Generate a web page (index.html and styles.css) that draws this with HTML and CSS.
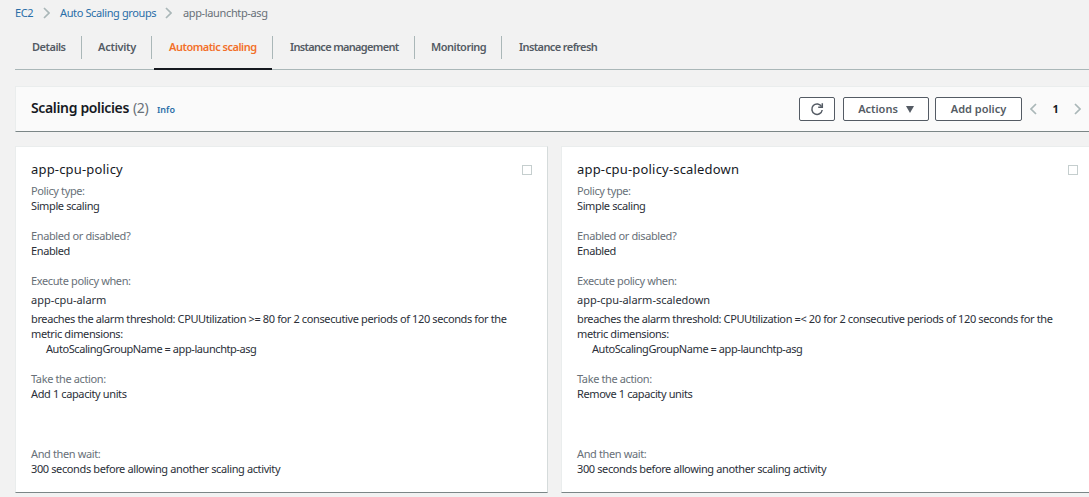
FILE: index.html
```html
<!DOCTYPE html>
<html lang="en">
<head>
<meta charset="utf-8">
<title>Auto Scaling groups</title>
<link rel="stylesheet" href="styles.css">
</head>
<body>
<nav class="breadcrumbs">
  <a class="crumb crumb-ec2">EC2</a>
  <svg class="chevron" viewBox="0 0 7 12"><path d="M1 1l5 5-5 5"/></svg>
  <a class="crumb crumb-groups">Auto Scaling groups</a>
  <svg class="chevron" viewBox="0 0 7 12"><path d="M1 1l5 5-5 5"/></svg>
  <span class="crumb crumb-current">app-launchtp-asg</span>
</nav>
<div class="tabs">
  <a class="tab tab-details"><span>Details</span></a>
  <a class="tab tab-activity"><span>Activity</span></a>
  <a class="tab tab-scaling active"><span>Automatic scaling</span></a>
  <a class="tab tab-management"><span>Instance management</span></a>
  <a class="tab tab-monitoring"><span>Monitoring</span></a>
  <a class="tab tab-refresh"><span>Instance refresh</span></a>
</div>
<header class="panel-header">
  <h2 class="title">Scaling policies</h2><span class="count">(2)</span><a class="info">Info</a>
  <div class="controls">
    <button class="btn btn-refresh"><svg class="refresh" viewBox="0 0 14 14"><path d="M11.6 4.6A5.2 5.2 0 1 0 12.2 8"/><path d="M12.3 1.2v4.1H8.2"/></svg></button>
    <button class="btn btn-actions"><span>Actions</span><svg class="caret" viewBox="0 0 8 7"><path d="M0 0h8L4 7z"/></svg></button>
    <button class="btn btn-add"><span>Add policy</span></button>
    <div class="pager">
      <svg class="chevron" viewBox="0 0 7 12"><path d="M6 1L1 6l5 5"/></svg>
      <span class="page">1</span>
      <svg class="chevron" viewBox="0 0 7 12"><path d="M1 1l5 5-5 5"/></svg>
    </div>
  </div>
</header>
<main class="cards">
  <section class="card">
    <div class="card-head"><h3 class="name">app-cpu-policy</h3><span class="checkbox"></span></div>
    <dl class="fields">
      <dt>Policy type:</dt><dd>Simple scaling</dd>
      <dt>Enabled or disabled?</dt><dd>Enabled</dd>
      <dt>Execute policy when:</dt>
      <dd class="alarm"><p class="alarm-name">app-cpu-alarm</p>
        <p class="threshold">breaches the alarm threshold: CPUUtilization &gt;= 80 for 2 consecutive periods of 120 seconds for the<br>metric dimensions:</p>
        <p class="dimension">AutoScalingGroupName = app-launchtp-asg</p></dd>
      <dt>Take the action:</dt><dd class="action">Add 1 capacity units</dd>
      <dt>And then wait:</dt><dd class="wait">300 seconds before allowing another scaling activity</dd>
    </dl>
  </section>
  <section class="card">
    <div class="card-head"><h3 class="name">app-cpu-policy-scaledown</h3><span class="checkbox"></span></div>
    <dl class="fields">
      <dt>Policy type:</dt><dd>Simple scaling</dd>
      <dt>Enabled or disabled?</dt><dd>Enabled</dd>
      <dt>Execute policy when:</dt>
      <dd class="alarm"><p class="alarm-name">app-cpu-alarm-scaledown</p>
        <p class="threshold">breaches the alarm threshold: CPUUtilization =&lt; 20 for 2 consecutive periods of 120 seconds for the<br>metric dimensions:</p>
        <p class="dimension">AutoScalingGroupName = app-launchtp-asg</p></dd>
      <dt>Take the action:</dt><dd class="action">Remove 1 capacity units</dd>
      <dt>And then wait:</dt><dd class="wait">300 seconds before allowing another scaling activity</dd>
    </dl>
  </section>
</main>
</body>
</html>
```
FILE: styles.css
```css
* { box-sizing: border-box; margin: 0; padding: 0; }
body {
  width: 1089px; height: 497px; overflow: hidden;
  background: #f2f2f2; color: #2b2f38;
  font: 11px/15px "Noto Sans", "Open Sans", sans-serif;
  letter-spacing: -0.38px; white-space: nowrap;
}
.breadcrumbs { display: flex; align-items: center; height: 26px; padding-left: 15px; color: #687078; }
.crumb { flex: none; padding-bottom: 1px; }
.crumb-ec2 { width: 28px; }
.crumb-groups { width: 105px; }
.crumb-current { padding-left: 1px; letter-spacing: -0.36px; }
.breadcrumbs a, .info { color: #2a6ea8; }
.chevron { flex: none; width: 7px; height: 12px; fill: none; stroke: #aab7b8; stroke-width: 1.7; }
.breadcrumbs .chevron { margin-right: 10px; }
.tabs { display: flex; height: 44px; margin-left: 15px; border-bottom: 1px solid #aab7b8; font-weight: 600; color: #545b64; letter-spacing: -0.5px; }
.tab { flex: none; height: 43px; padding-top: 10px; }
.tab span { display: block; height: 23px; padding-left: 17px; border-right: 1px solid #aab7b8; line-height: 21px; }
.tab-details { width: 67px; }
.tab-activity { width: 70px; letter-spacing: -0.25px; }
.tab-scaling { width: 121px; }
.tab-management { width: 142px; letter-spacing: -0.68px; }
.tab-monitoring { width: 87px; }
.tab-refresh { letter-spacing: -0.6px; }
.tab-refresh span { border-right: 0; }
.tab-activity span, .tab-monitoring span { padding-left: 16px; }
.active { color: #f2702a; }
.active::after { content: ""; display: block; height: 2px; margin: 9px 1px 0 2px; background: #16191f; }
.panel-header { display: flex; align-items: center; height: 46px; margin: 16px 0 0 15px; padding-left: 16px; background: #fafafa; border: 1px solid #eaeded; border-width: 1px 0 1px 1px; border-bottom-color: #7b8687; }
.title { margin-left: -1px; padding-bottom: 2px; font-size: 14px; line-height: 20px; font-weight: 600; letter-spacing: -0.35px; width: 102px; color: #16191f; }
.count { width: 24px; padding-bottom: 3px; font-size: 14px; color: #687078; }
.info { padding-top: 1px; font-size: 9px; font-weight: 600; letter-spacing: 0; }
.controls { display: flex; align-items: center; margin-left: auto; }
.btn { display: flex; align-items: center; justify-content: center; height: 24px; border: 1px solid #545b64; border-radius: 2px; background: #fff; color: #545b64; font: 600 11px/15px "Noto Sans", "Open Sans", sans-serif; letter-spacing: 0; }
.btn span { padding-bottom: 2px; }
.btn-refresh { width: 36px; margin-right: 8px; }
.btn-actions { width: 86px; gap: 8px; margin-right: 6px; }
.btn-add { width: 87px; margin-right: 8px; }
.refresh { width: 14px; height: 14px; fill: none; stroke: #545b64; stroke-width: 1.5; }
.caret { width: 8px; height: 7px; fill: #545b64; }
.pager { display: flex; align-items: center; width: 59px; }
.page { width: 37px; padding-bottom: 2px; text-align: center; font-weight: 700; color: #16191f; }
.cards { display: flex; gap: 13px; margin: 14px 0 0 15px; }
.card { flex: none; width: 533px; height: 347px; padding: 14px 15px 0; background: #fff; border: 1px solid #d5dbdb; border-top-color: #eaeded; border-left-color: #eaeded; border-bottom-color: #7b8687; }
.card-head { display: flex; justify-content: space-between; height: 22px; }
.name { font-size: 13px; line-height: 17px; font-weight: 400; letter-spacing: 0.18px; color: #16191f; }
.checkbox { width: 10px; height: 10px; margin-top: 4px; border: 1px solid #c5cece; }
.fields dt { color: #687078; }
.fields dd { margin-bottom: 15px; }
.alarm-name { padding: 4px 0; letter-spacing: -0.02px; }
.dimension { padding-left: 15px; letter-spacing: -0.43px; }
.fields .action { margin-bottom: 45px; }
```
